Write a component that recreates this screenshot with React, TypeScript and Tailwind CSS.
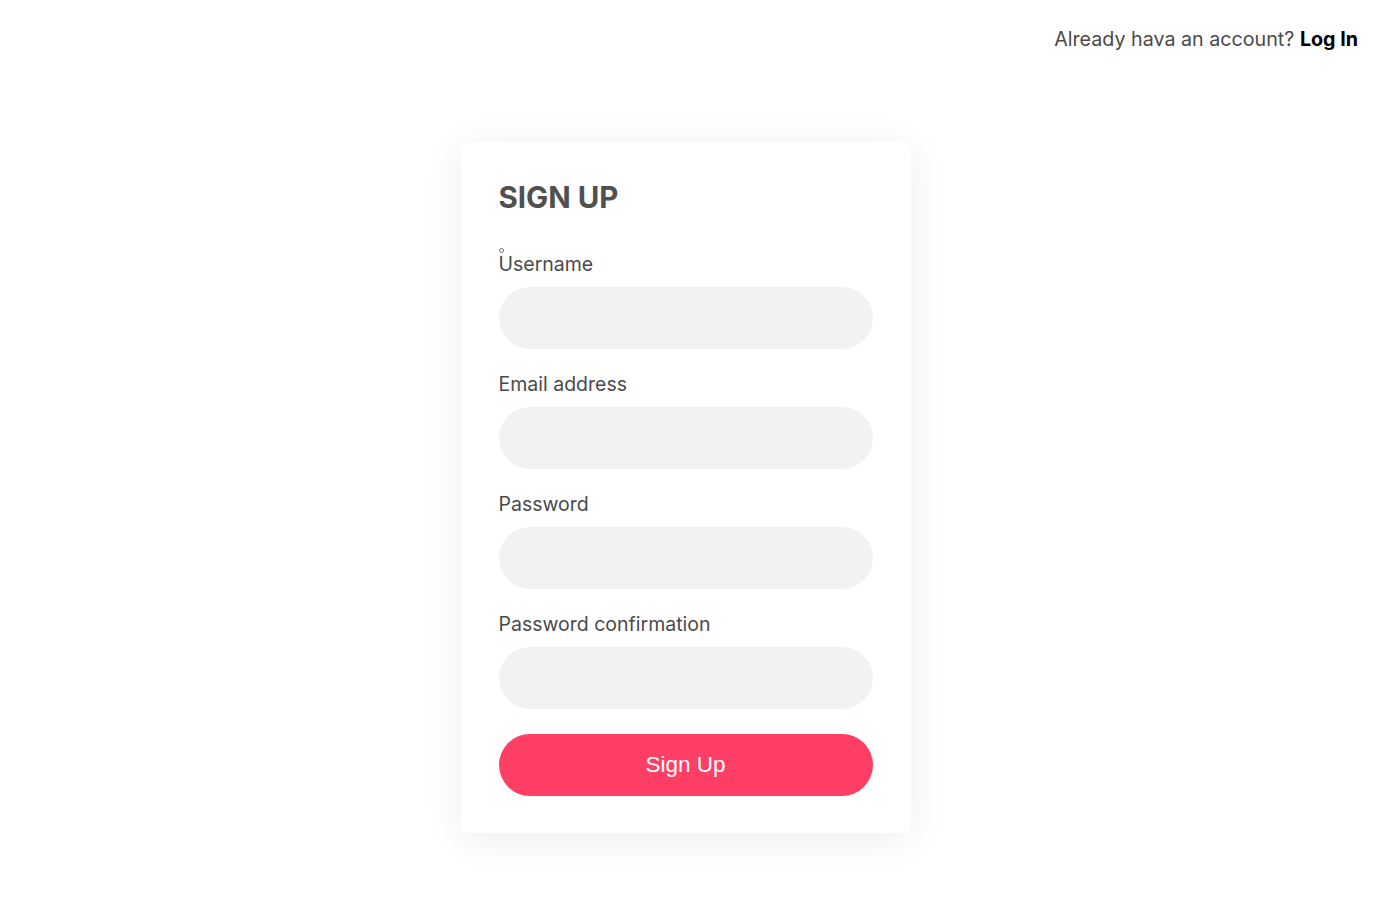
export default function App() {
  const fields = ['Username', 'Email address', 'Password', 'Password confirmation'];

  return (
    <div className="min-h-screen bg-white font-['Inter','Open_Sans',sans-serif] text-[#4a4a4a]">
      <header className="flex justify-end pt-[26px] pr-[26px] text-[19.7px] leading-[26px]">
        <span>
          Already hava an account? <a className="font-bold text-black">Log In</a>
        </span>
      </header>

      <div className="flex justify-center pt-[90px] pr-[13px]">
        <div className="w-[450px] rounded-lg bg-white px-[38px] pt-[38px] pb-[37px] shadow-[0_6px_40px_rgba(0,0,0,0.07)]">
          <h1 className="text-[29.5px] font-bold leading-[34px] text-[#505050]">SIGN UP</h1>

          <form className="mt-[37px] flex flex-col">
            {fields.map((label, i) => (
              <div key={label} className={i > 0 ? 'mt-[22px]' : ''}>
                <label className="relative block text-[19.5px] leading-[26px]">
                  {i === 0 && (
                    <span className="absolute left-0 top-[-3px] h-[5px] w-[5px] rounded-full border border-[#777]" />
                  )}
                  {label}
                </label>
                <input
                  type={label.startsWith('Password') ? 'password' : 'text'}
                  className="mt-[10px] block h-[62px] w-full rounded-full bg-[#f2f2f2] px-6 outline-none"
                />
              </div>
            ))}

            <button
              type="button"
              className="mt-[25px] h-[62px] w-full rounded-full bg-[#ff3e66] font-['Liberation_Sans',Arial,sans-serif] text-[22.5px] text-white"
            >
              Sign Up
            </button>
          </form>
        </div>
      </div>
    </div>
  );
}
